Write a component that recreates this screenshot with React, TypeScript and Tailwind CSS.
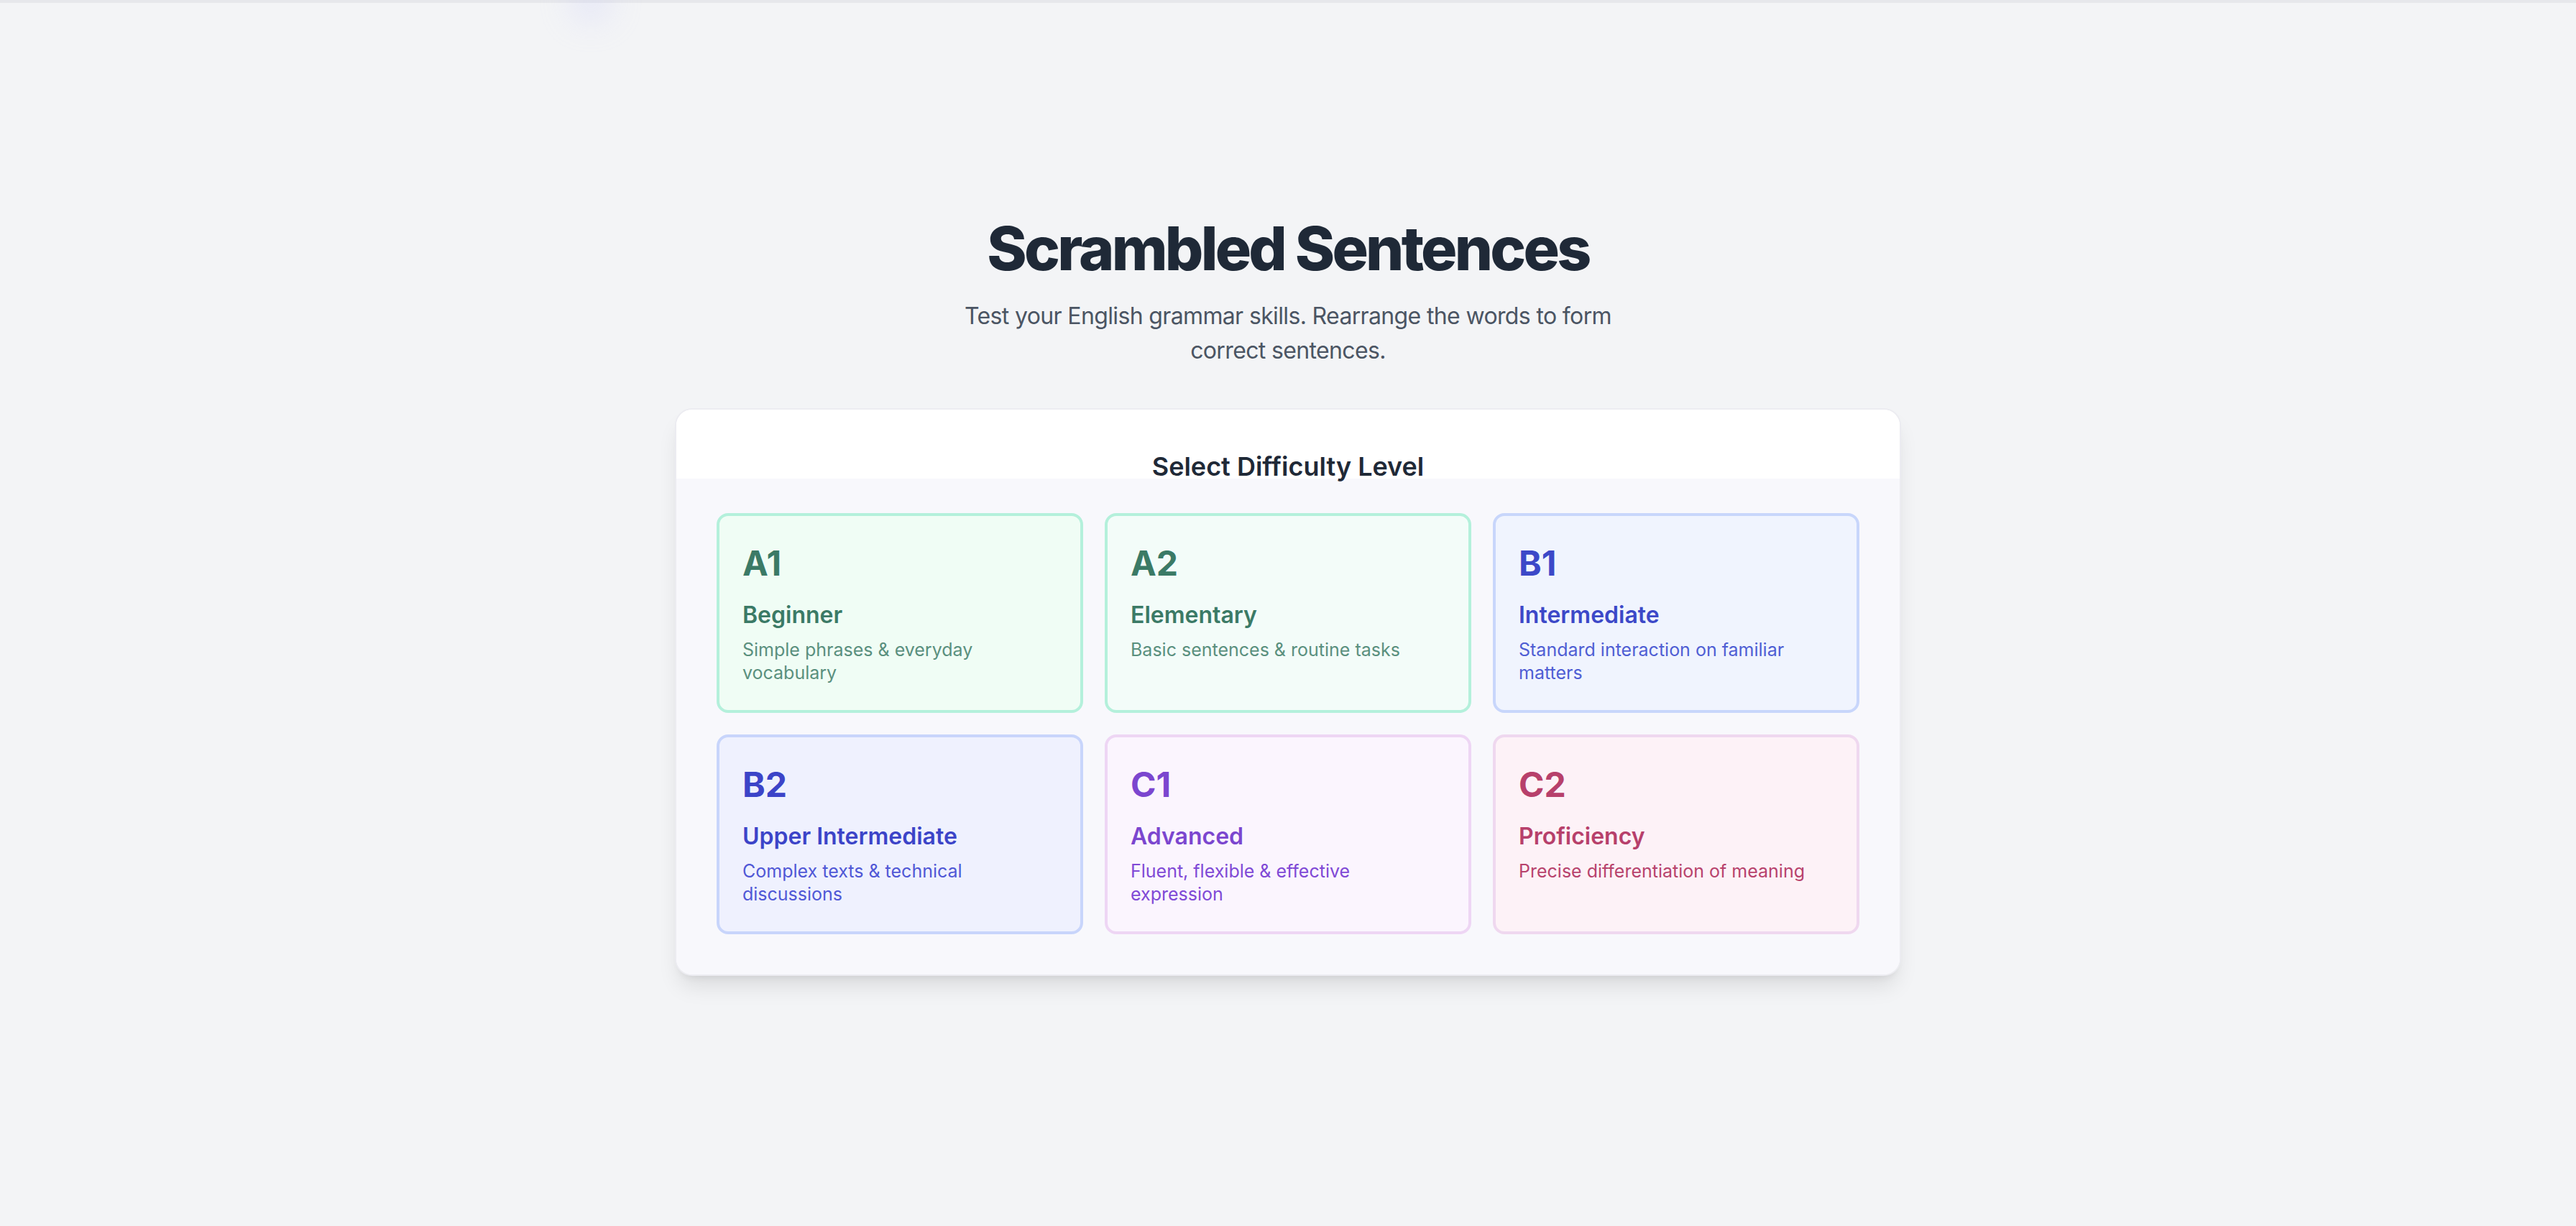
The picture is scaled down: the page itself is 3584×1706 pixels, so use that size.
import React from "react";

type Level = {
  code: string;
  name: string;
  desc: string;
  bg: string;
  border: string;
  title: string;
  text: string;
};

const levels: Level[] = [
  {
    code: "A1",
    name: "Beginner",
    desc: "Simple phrases & everyday vocabulary",
    bg: "bg-[#f0fdf5]",
    border: "border-[#b4f0db]",
    title: "text-[#3b7a66]",
    text: "text-[#5a907e]",
  },
  {
    code: "A2",
    name: "Elementary",
    desc: "Basic sentences & routine tasks",
    bg: "bg-[#f3fcf9]",
    border: "border-[#b4f0db]",
    title: "text-[#3b7a66]",
    text: "text-[#5a907e]",
  },
  {
    code: "B1",
    name: "Intermediate",
    desc: "Standard interaction on familiar matters",
    bg: "bg-[#f0f4fe]",
    border: "border-[#c8d6fb]",
    title: "text-[#3c48c8]",
    text: "text-[#4f5ed4]",
  },
  {
    code: "B2",
    name: "Upper Intermediate",
    desc: "Complex texts & technical discussions",
    bg: "bg-[#eff1fe]",
    border: "border-[#c8d5fb]",
    title: "text-[#3c44c8]",
    text: "text-[#5058d6]",
  },
  {
    code: "C1",
    name: "Advanced",
    desc: "Fluent, flexible & effective expression",
    bg: "bg-[#fbf5fe]",
    border: "border-[#eed6f4]",
    title: "text-[#7b46cf]",
    text: "text-[#8049d6]",
  },
  {
    code: "C2",
    name: "Proficiency",
    desc: "Precise differentiation of meaning",
    bg: "bg-[#fdf2f7]",
    border: "border-[#efd8ef]",
    title: "text-[#b7406b]",
    text: "text-[#b8436d]",
  },
];

function LevelCard({ level }: { level: Level }) {
  return (
    <button
      type="button"
      className={`flex flex-col items-start text-left rounded-lg border-2 ${level.border} ${level.bg} px-4 pt-[17px] pb-[18px] cursor-pointer`}
    >
      <span className={`text-2xl leading-8 font-bold ${level.title}`}>{level.code}</span>
      <span className={`mt-2 text-base leading-6 font-semibold ${level.title}`}>{level.name}</span>
      <span className={`mt-1 text-[12.5px] leading-4 ${level.text}`}>{level.desc}</span>
    </button>
  );
}

export default function App() {
  return (
    <div className="min-h-screen w-full bg-[#f3f4f6] [font-family:Inter,'Noto_Sans',sans-serif] overflow-hidden">
      <div className="[zoom:2] relative">
        <div className="h-[2px] w-full bg-[#e6e7eb]" />
        <div className="pointer-events-none absolute left-[398px] top-[-12px] h-[26px] w-[26px] rounded-full bg-[#c7c9f7] opacity-40 blur-md" />

        <main className="flex flex-col items-center pt-[150px]">
          <h1 className="text-[42px] leading-none font-extrabold tracking-[-0.045em] text-[#1f2937]">
            Scrambled Sentences
          </h1>
          <p className="mt-[14px] max-w-[458px] text-center text-base leading-6 tracking-[-0.02em] text-[#4b5563]">
            Test your English grammar skills. Rearrange the words to form correct sentences.
          </p>

          <section className="mt-[28px] w-[853px] overflow-hidden rounded-xl border border-[#ececf1] bg-white shadow-lg">
            <div className="bg-white pt-[31px] text-center">
              <h2 className="text-lg leading-[17px] font-semibold text-[#1f2937]">
                Select Difficulty Level
              </h2>
            </div>
            <div className="bg-[#f8f8fc] px-7 pt-[24px] pb-7">
              <div className="grid grid-cols-3 gap-[15px]">
                {levels.map((l) => (
                  <LevelCard key={l.code} level={l} />
                ))}
              </div>
            </div>
          </section>
        </main>
      </div>
    </div>
  );
}
